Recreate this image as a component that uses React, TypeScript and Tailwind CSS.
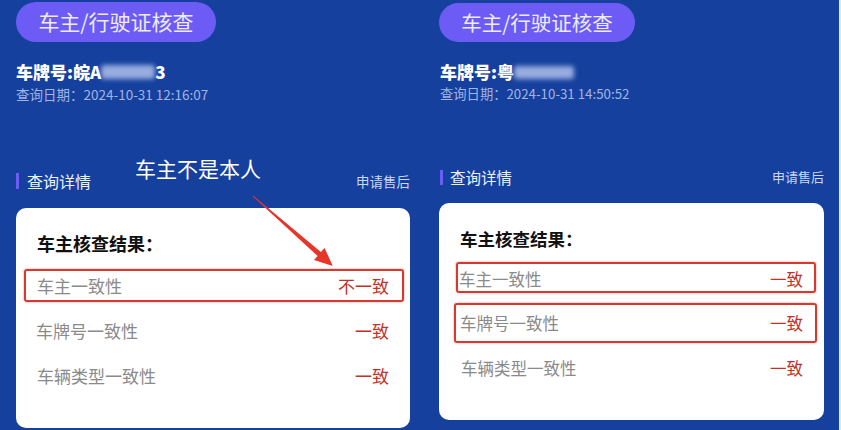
import React from "react";

const font = { fontFamily: '"Noto Sans CJK SC", "Noto Sans", sans-serif' };

function Row({
  label,
  value,
  boxed,
  cls,
}: {
  label: string;
  value: string;
  boxed?: boolean;
  cls: string;
}) {
  return (
    <div
      className={`flex items-center justify-between rounded-[3px] border-2 ${
        boxed ? "border-[#d8392e] shadow-[0_0_2px_rgba(216,57,46,0.6)]" : "border-transparent"
      } ${cls}`}
    >
      <span className="text-[#8a8a8a]">{label}</span>
      <span className="text-[#bf3328]">{value}</span>
    </div>
  );
}

export default function App() {
  return (
    <div
      className="relative flex h-[430px] w-[841px] overflow-hidden bg-[#15409e]"
      style={font}
    >
      {/* Left panel */}
      <div className="flex w-[423px] flex-col pl-[16px] pr-[13px] pt-[2px]">
        <div className="flex h-[40px] w-[200px] items-center justify-center rounded-full bg-[#6c5cf5] text-[21px] text-[#ecebff]">
          车主/行驶证核查
        </div>
        <div className="mt-[20px] flex items-center text-[17px] font-black leading-[20px] text-white">
          <span>车牌号:皖A</span>
          <span className="inline-block h-[14px] w-[54px] rounded-[3px] bg-[#b9c8f0] opacity-80 blur-[2.5px]" />
          <span>3</span>
        </div>
        <div className="mt-[3px] text-[13.5px] leading-[18px] text-[#a3b4e2]">
          查询日期：2024-10-31 12:16:07
        </div>
        <div className="mt-[69px] flex h-[18px] items-center justify-between">
          <div className="flex items-center">
            <div className="h-[16px] w-[3px] bg-[#6c5cf5]" />
            <span className="ml-[8px] text-[16px] leading-[18px] text-[#eef2ff]">查询详情</span>
          </div>
          <span className="text-[13.5px] leading-[18px] text-[#ccd6f2]">申请售后</span>
        </div>
        <div className="mt-[18px] h-[220px] rounded-[10px] bg-white pt-[25px]">
          <div className="pl-[21px] text-[18px] font-bold leading-[20px] text-[#111]">
            车主核查结果：
          </div>
          <div className="mt-[16px] flex flex-col gap-[12px] text-[17px]">
            <Row label="车主一致性" value="不一致" boxed cls="mx-[8px] mr-[6px] h-[33px] pl-[11px] pr-[13px]" />
            <Row label="车牌号一致性" value="一致" cls="mx-[8px] mr-[6px] h-[33px] pl-[10px] pr-[13px]" />
            <Row label="车辆类型一致性" value="一致" cls="mx-[8px] mr-[6px] h-[33px] pl-[11px] pr-[13px]" />
          </div>
        </div>
      </div>

      {/* Right panel */}
      <div className="flex w-[416px] flex-col pl-[16px] pr-[15px] pt-[3px]">
        <div className="flex h-[39px] w-[196px] items-center justify-center rounded-full bg-[#6c5cf5] text-[20.5px] text-[#ecebff]">
          车主/行驶证核查
        </div>
        <div className="mt-[20px] flex items-center pl-[1px] text-[17px] font-black leading-[20px] text-white">
          <span>车牌号:粤</span>
          <span className="inline-block h-[13px] w-[60px] rounded-[3px] bg-[#b9c8f0] opacity-80 blur-[2.5px]" />
        </div>
        <div className="mt-[3px] pl-[1px] text-[13.3px] leading-[18px] text-[#a3b4e2]">
          查询日期：2024-10-31 14:50:52
        </div>
        <div className="mt-[65px] flex h-[18px] items-center justify-between">
          <div className="flex items-center">
            <div className="ml-[1px] h-[15px] w-[3px] bg-[#6c5cf5]" />
            <span className="ml-[7px] text-[15.5px] leading-[18px] text-[#eef2ff]">查询详情</span>
          </div>
          <span className="text-[13px] leading-[18px] text-[#ccd6f2]">申请售后</span>
        </div>
        <div className="mt-[17px] h-[217px] rounded-[10px] bg-white pt-[26px]">
          <div className="pl-[21px] text-[17.5px] font-bold leading-[20px] text-[#111]">
            车主核查结果：
          </div>
          <div className="flex flex-col text-[16.5px]">
            <Row label="车主一致性" value="一致" boxed cls="ml-[17px] mr-[8px] mt-[13px] h-[31px] pl-[1px] pr-[11px] pt-[4px]" />
            <Row label="车牌号一致性" value="一致" boxed cls="ml-[15px] mr-[7px] mt-[10px] h-[40px] pl-[4px] pr-[12px]" />
            <Row label="车辆类型一致性" value="一致" cls="ml-[17px] mr-[8px] mt-[9px] h-[33px] pl-[3px] pr-[11px]" />
          </div>
        </div>
      </div>
      <div className="w-[2px] bg-[#d9ecf6]" />

      {/* Annotation */}
      <div className="absolute left-[135px] top-[154px] text-[21px] leading-[28px] text-white">
        车主不是本人
      </div>
      <svg className="absolute left-0 top-0" width="841" height="430" viewBox="0 0 841 430">
        <polygon
          points="253.3,195.6 320.9,252.1 324.6,248 332.8,265.9 314,260 317.6,255.9 252.7,196.4"
          fill="#e8352a"
        />
      </svg>
    </div>
  );
}
